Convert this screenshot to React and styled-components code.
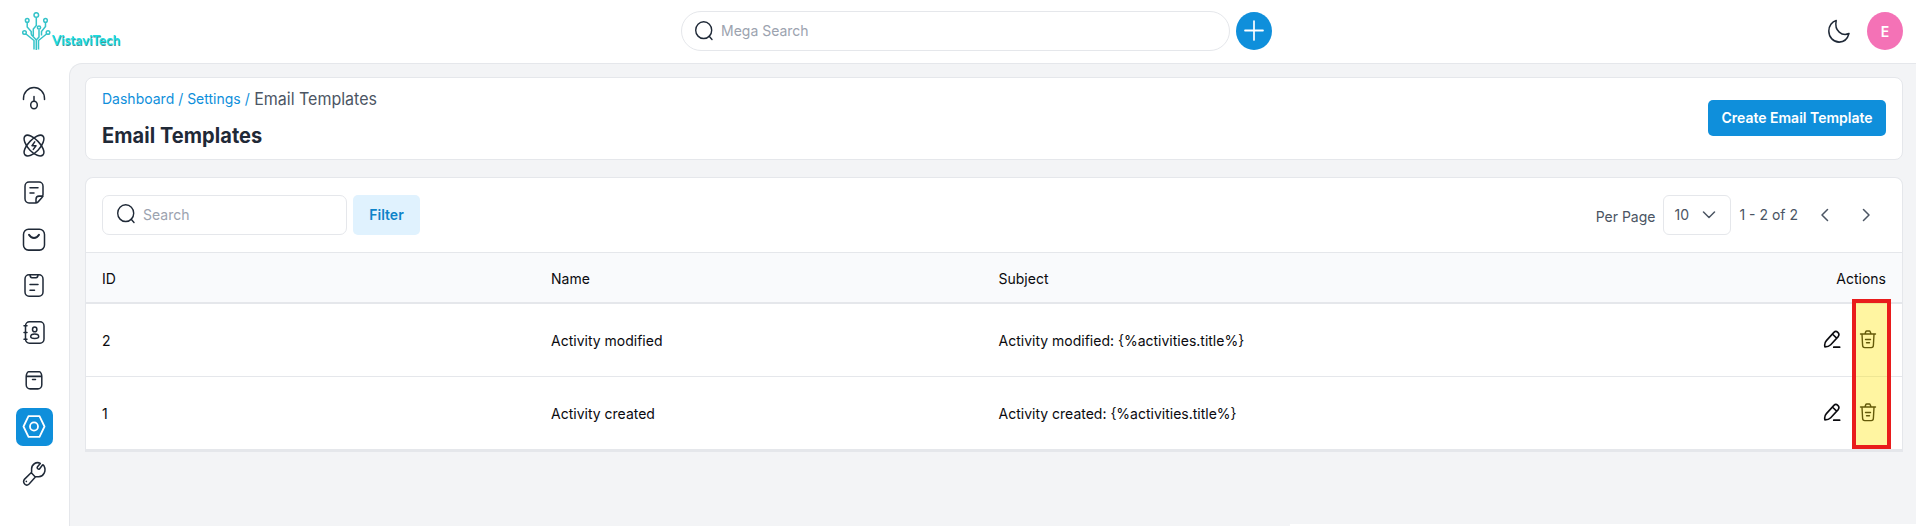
import React from "react";
import styled, { createGlobalStyle, css } from "styled-components";

const Global = createGlobalStyle`
  * { box-sizing: border-box; }
  body { margin: 0; background: #fff; overflow: hidden; }
  body, input, button { font-family: Inter, "Liberation Sans", sans-serif; }
  svg { display: block; flex: none; }
`;

const c = {
  blue: "#0f8fdb",
  line: "#e5e7eb",
  page: "#f3f4f6",
  ink: "#1f2937",
  muted: "#4b5563",
  faint: "#9ca3af",
};

const Page = styled.div`
  height: 526px;
  display: flex;
  flex-direction: column;
  background: #fff;
  font-size: 14px;
  color: ${c.ink};
`;

const Header = styled.header`
  height: 63px;
  flex: none;
  display: grid;
  grid-template-columns: 681px 591px 1fr;
  align-items: center;
  padding-bottom: 1px;
`;

const Brand = styled.div`
  display: flex;
  align-items: flex-start;
  gap: 1px;
  height: 39px;
  padding-left: 22px;
`;

const BrandName = styled.span`
  margin-top: 20px;
  font: 700 13.4px/17px Lato, sans-serif;
  letter-spacing: 0;
  color: #1cdde0;
  text-shadow: 0.5px 0.5px 0.6px #4a8f94;
`;

const Tall = styled.span`
  display: inline-block;
  transform: scaleY(1.05);
  white-space: pre;
`;

const SearchGroup = styled.div`
  display: flex;
  align-items: center;
  gap: 6px;
`;

const SearchBox = styled.label`
  display: flex;
  align-items: center;
  gap: 7px;
  width: ${(p) => (p.$round ? 549 : 245)}px;
  height: 40px;
  padding: 0 0 1px ${(p) => (p.$round ? 12 : 13)}px;
  border: 1px solid ${c.line};
  border-radius: ${(p) => (p.$round ? 20 : 7)}px;
  background: #fff;
  color: ${c.faint};
  svg { color: ${c.ink}; margin-top: ${(p) => (p.$round ? 0 : -2)}px; }
`;

const AddButton = styled.button`
  display: grid;
  place-items: center;
  width: 36px;
  height: 38px;
  padding: 0 0 1px;
  border: 0;
  border-radius: 50%;
  background: ${c.blue};
  color: #fff;
`;

const UserArea = styled.div`
  display: flex;
  justify-content: flex-end;
  align-items: center;
  gap: 16px;
  padding-right: 13px;
`;

const Avatar = styled.div`
  display: grid;
  place-items: center;
  width: 36px;
  height: 38px;
  border-radius: 50%;
  background: #f472b6;
  color: #fff;
  font-weight: 600;
`;

const Body = styled.div`
  flex: 1;
  min-height: 0;
  display: flex;
`;

const Sidebar = styled.nav`
  width: 69px;
  flex: none;
  padding: 17px 0 0 16px;
  display: flex;
  flex-direction: column;
  gap: 8.8px;
`;

const NavItem = styled.a`
  display: grid;
  place-items: center;
  flex: none;
  width: 37px;
  height: 38px;
  padding: 0 1px 0.4px 0;
  border-radius: 7px;
  ${(p) => p.$active && css`background: ${c.blue}; color: #fff;`}
`;

const Content = styled.main`
  flex: 1;
  min-width: 0;
  display: flex;
  flex-direction: column;
  background: ${c.page};
  border: solid ${c.line};
  border-width: 1px 0 0 1px;
  border-top-left-radius: 13px;
  padding: 13px 13px 0 15px;
`;

const TitleCard = styled.section`
  display: flex;
  justify-content: space-between;
  align-items: center;
  height: 83px;
  flex: none;
  padding: 0 16px 1px;
  border: 1px solid ${c.line};
  border-radius: 8px;
  background: #fff;
`;

const Crumbs = styled.div`
  display: flex;
  align-items: center;
  height: 22px;
  white-space: pre;
  color: ${c.blue};
`;

const Links = styled(Tall)`
  padding-top: 2px;
`;

const Current = styled(Tall)`
  padding: 2px 0 0 0.5px;
  font-size: 16px;
  color: ${c.muted};
`;

const Title = styled.h1`
  margin: 14px 0 0;
  font-size: 20px;
  line-height: 27px;
  font-weight: 700;
  letter-spacing: 0.06px;
`;

const Button = styled.button`
  height: ${(p) => (p.$soft ? 40 : 36)}px;
  width: ${(p) => (p.$soft ? 67 : 178)}px;
  padding: 0 0 1px;
  border: 0;
  border-radius: 5px;
  font-size: 14px;
  font-weight: 600;
  white-space: nowrap;
  background: ${(p) => (p.$soft ? "#e0f2fe" : c.blue)};
  color: ${(p) => (p.$soft ? "#0d83c9" : "#fff")};
`;

const TableCard = styled.section`
  position: relative;
  margin-top: 17px;
  border: 1px solid ${c.line};
  border-bottom: 3px solid ${c.line};
  border-radius: 8px 8px 0 0;
  background: #fff;
`;

const Toolbar = styled.div`
  display: flex;
  justify-content: space-between;
  align-items: center;
  height: 74px;
  padding: 0 16px;
`;

const Pager = styled.div`
  display: flex;
  align-items: center;
  color: ${c.muted};
`;

const Select = styled.div`
  display: flex;
  align-items: center;
  justify-content: space-between;
  width: 68px;
  height: 40px;
  margin: 0 8px;
  padding: 0 14px 1px 10px;
  border: 1px solid ${c.line};
  border-radius: 6px;
`;

const PerPage = styled(Tall)`
  padding-top: 2px;
`;

const Range = styled(Tall)`
  padding-bottom: 1px;
`;

const PageArrows = styled.div`
  display: flex;
  gap: 33px;
  padding: 0 16px 1px 23px;
`;

const Row = styled.div`
  display: grid;
  grid-template-columns: 449px 447.5px 1fr auto;
  align-items: center;
  height: ${(p) => p.$h}px;
  padding: ${(p) => (p.$head ? "2px" : "0")} 16px 0;
  color: #0b0b0f;
  border-top: ${(p) => p.$top || 1}px solid ${c.line};
  background: ${(p) => (p.$head ? "#f9fafc" : "#fff")};
`;

const Actions = styled.div`
  display: flex;
  gap: 18px;
  padding: 0 9px 1px 0;
`;

const Highlight = styled.div`
  position: absolute;
  right: 11px;
  top: 121px;
  width: 39px;
  height: 150px;
  border: 4px solid #e91c1c;
  background: rgba(254, 228, 0, 0.37);
`;

const BottomEdge = styled.div`
  align-self: flex-end;
  flex: none;
  width: 626px;
  height: 2px;
  margin: auto -13px 0 0;
  background: #fff;
`;

const Icon = ({ w = 24, h = 25, box = "0 0 24 24", sw = 1.5, children }) => (
  <svg width={w} height={h} viewBox={box} preserveAspectRatio="none" fill="none" stroke="currentColor" strokeWidth={sw} strokeLinecap="round" strokeLinejoin="round">
    {children}
  </svg>
);

const SearchIcon = () => (
  <Icon w={20} h={21} box="0 0 20 20" sw={1.4}>
    <circle cx="9.7" cy="9.7" r="8" />
    <path d="m15.2 15.5 2.8 3" />
  </Icon>
);

const Logo = () => (
  <svg width="29" height="39" viewBox="0 0 29 39" fill="none" stroke="#35c3c9" strokeWidth="1.5">
    <circle cx="14.3" cy="3" r="2.3" />
    <circle cx="5.2" cy="8.4" r="1.8" />
    <circle cx="23.5" cy="8.4" r="1.8" />
    <circle cx="2.5" cy="20.5" r="1.8" />
    <circle cx="26" cy="20.5" r="1.8" />
    <circle cx="17" cy="15.5" r="1.6" />
    <path d="M14.3 5.5v8l-3 3.5v7M5.2 10.5v4.5l4 4.5v3M23.5 10.5v4l-4 5v4M4 22l8 6.500v9M24.500 22l-8 6.500v9M17 17.500v7.500l-2.700 3v10M9.200 22.500l5.100 5.500" />
  </svg>
);

const navIcons = [
  <><path d="M1.500 13v-1A10.500 10.500 0 0 1 22.500 12v1M12 10v4.500" /><ellipse cx="12" cy="18.200" rx="3.300" ry="3.600" /></>,
  <><path d="M3 3c2.500-2.500 8.500.5 13 5s7.500 10.500 5 13-8.500 0-13-4.500S.5 5.500 3 3Z" /><path d="M21 3c2.500 2.500-.5 9-5 13.500S5.500 23.500 3 21s.5-8.500 5-13S18.500.5 21 3Z" /><path d="M12.700 8.500 10 12.200h4l-2.700 3.500" /></>,
  <><path d="M21 14V6a4 4 0 0 0-4-4H7a4 4 0 0 0-4 4v12a4 4 0 0 0 4 4h6.500c1 0 2-.4 2.600-1l3.700-4c.8-.8 1.200-1.800 1.200-3ZM14 22v-3.500a3 3 0 0 1 3-3h4M8 7.500h8M8 12.500h4" /></>,
  <><rect x="1.500" y="2.200" width="21" height="20" rx="5" /><path d="M7 7.500c2.500 4 7.500 4 10 0" strokeWidth="2" /></>,
  <><rect x="3" y="1.700" width="18" height="20.600" rx="4" /><path d="M8 1.700c0 1.500.8 2.800 2 2.800h4c1.200 0 2-1.300 2-2.800M8 11h8M8 16.500h4.500" /></>,
  <><rect x="3.500" y="1.700" width="18.500" height="20.600" rx="4" /><path d="M2 5.500h3M2 12h3M2 18.500h3" /><circle cx="12.700" cy="9" r="2.200" /><path d="M12.700 13.500c-2.400 0-4 1.200-4 2.600s1 1.600 4 1.600 4-.2 4-1.600-1.600-2.600-4-2.600Z" /></>,
  <><path d="M4.200 9v8a4 4 0 0 0 4 4h7.600a4 4 0 0 0 4-4V9M6.500 4.500h11c1 0 2.300 2.500 2.300 4.500H4.200c0-2 1.300-4.500 2.300-4.500ZM10.500 12h3" /></>,
  <g strokeWidth="1.800"><path d="M6.500 2h11L22.500 12l-5 10h-11L1.500 12Z" /><circle cx="12" cy="12" r="4" /></g>,
  <><path d="M20.300 4 17.500 7.600c-1 1-3-.8-2-2L18.300 2.300C14.200.2 9.300 3.400 9.600 8.200v2.600L2.600 17.400c-2.700 3.200 1.300 7.600 4.500 4.700l6.500-7h3.200c4.800-.3 7.800-5.600 5.200-10.400-.5-.9-1.100-1.300-1.700-.7ZM9.300 11.300l4 4M4.300 19.600l.1.100" /></>,
];

const Pencil = () => (
  <Icon w={18} h={19} box="0 0 18 18" sw={1.600}>
    <path d="M1.900 16c-.5-2 0-4.300 1.500-5.900L10.900 2.200c2.500-2.300 6.500 1 4.300 4L7.700 14c-1.400 1.400-3.500 2-5.800 2ZM9.400 3.800l4.200 4M10.700 16.300h6" />
  </Icon>
);
const Trash = () => (
  <Icon w={18} h={19} box="0 0 18 18" sw={1.400}>
    <path d="M1.500 3.700h15M3 4l.6 10.500c0 1.300.9 2.200 2.200 2.200h6.400c1.300 0 2.200-.9 2.200-2.200L15 4M6 3.500l.7-1.700c.2-.5.500-.8 1-.8h2.600c.5 0 .8.3 1 .8l.7 1.700M6.500 9h5M7.500 12h3" />
  </Icon>
);

const rows = [
  { id: "2", name: "Activity modified", top: 2, h: 74 },
  { id: "1", name: "Activity created", top: 1, h: 73 },
];

export default function App() {
  return (
    <Page>
      <Global />
      <Header>
        <Brand><Logo /><BrandName>VistaviTech</BrandName></Brand>
        <SearchGroup>
          <SearchBox $round><SearchIcon /><Tall>Mega Search</Tall></SearchBox>
          <AddButton aria-label="Add"><Icon w={20} h={21} box="0 0 20 20" sw={1.700}><path d="M10 1v18M1 10h18" /></Icon></AddButton>
        </SearchGroup>
        <UserArea>
          <Icon><path d="M9.200 1.500C5 2.500 1.800 6.500 1.800 11.500c0 6 4.700 10.700 10.300 10.700 4.600 0 8.500-3.200 9.900-8.200-6.800 2.800-15-2.500-12.800-12.500Z" /></Icon>
          <Avatar><Tall>E</Tall></Avatar>
        </UserArea>
      </Header>
      <Body>
        <Sidebar>
          {navIcons.map((art, i) => (
            <NavItem key={i} $active={i === 7}><Icon>{art}</Icon></NavItem>
          ))}
        </Sidebar>
        <Content>
          <TitleCard>
            <div>
              <Crumbs><Links>Dashboard / Settings / </Links><Current>Email Templates</Current></Crumbs>
              <Title><Tall>Email Templates</Tall></Title>
            </div>
            <Button><Tall>Create Email Template</Tall></Button>
          </TitleCard>
          <TableCard>
            <Toolbar>
              <SearchGroup>
                <SearchBox><SearchIcon /><Tall>Search</Tall></SearchBox>
                <Button $soft><Tall>Filter</Tall></Button>
              </SearchGroup>
              <Pager>
                <PerPage>Per Page</PerPage>
                <Select><Tall>10</Tall><Icon w={14} h={8} box="0 0 14 8"><path d="m1.500 1 5.500 5.500L12.500 1" /></Icon></Select>
                <Range>1 - 2 of 2</Range>
                <PageArrows>
                  <Icon w={8} h={14} box="0 0 8 14"><path d="M6.500 1.500 1 7l5.500 5.500" /></Icon>
                  <Icon w={8} h={14} box="0 0 8 14"><path d="M1.500 1.500 7 7l-5.500 5.500" /></Icon>
                </PageArrows>
              </Pager>
            </Toolbar>
            <Row $head $h={50}><Tall>ID</Tall><Tall>Name</Tall><Tall>Subject</Tall><Tall>Actions</Tall></Row>
            {rows.map((r) => (
              <Row key={r.id} $h={r.h} $top={r.top}>
                <Tall>{r.id}</Tall>
                <Tall>{r.name}</Tall>
                <Tall>{r.name + ": {%activities.title%}"}</Tall>
                <Actions><Pencil /><Trash /></Actions>
              </Row>
            ))}
            <Highlight />
          </TableCard>
          <BottomEdge />
        </Content>
      </Body>
    </Page>
  );
}
